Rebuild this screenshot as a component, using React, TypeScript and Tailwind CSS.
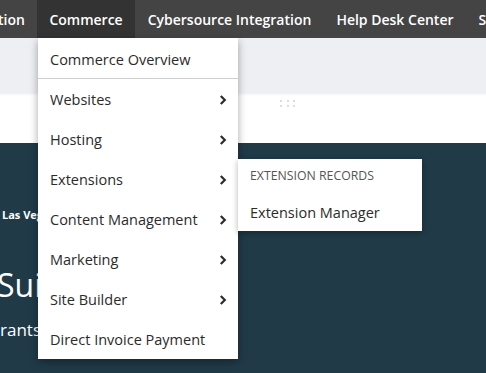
import React from 'react';

const navItems = ['tion', 'Commerce', 'Cybersource Integration', 'Help Desk Center', 'Support'];

const menuItems: { label: string; sub: boolean }[] = [
  { label: 'Websites', sub: true },
  { label: 'Hosting', sub: true },
  { label: 'Extensions', sub: true },
  { label: 'Content Management', sub: true },
  { label: 'Marketing', sub: true },
  { label: 'Site Builder', sub: true },
  { label: 'Direct Invoice Payment', sub: false },
];

const Chevron: React.FC = () => (
  <svg width="8" height="12" viewBox="0 0 8 12" className="shrink-0">
    <path d="M1.8 2 L5.8 6 L1.8 10" fill="none" stroke="#2b2b2b" strokeWidth="2.2" />
  </svg>
);

const App: React.FC = () => {
  return (
    <div
      className="relative w-[486px] h-[373px] overflow-hidden bg-[#203a48]"
      style={{ fontFamily: '"Open Sans", "Liberation Sans", sans-serif' }}
    >
      {/* top nav */}
      <nav className="flex h-[38px] bg-[#444444] text-white text-[14px] font-semibold whitespace-nowrap -ml-[2px]">
        {navItems.map((item, i) => (
          <div
            key={item}
            className={`flex shrink-0 items-center h-full ${i === 0 ? 'pl-0 pr-[12px]' : 'px-[12.5px]'} ${
              item === 'Commerce' ? 'bg-[#333333]' : ''
            }`}
          >
            {item}
          </div>
        ))}
      </nav>

      {/* light toolbar band */}
      <div className="h-[55px] bg-[#eeeff3]" />

      {/* white strip with drag handle */}
      <div className="h-[50px] bg-white shadow-[inset_0_3px_3px_-2px_rgba(0,0,0,0.08)] flex justify-start pl-[280px] pt-[7px]">
        <div className="grid grid-cols-3 gap-x-[4.5px] gap-y-[3px] h-fit">
          {Array.from({ length: 6 }).map((_, i) => (
            <span key={i} className="w-[2px] h-[2px] bg-[#dcdcdc]" />
          ))}
        </div>
      </div>

      {/* dark hero, mostly covered by the menu */}
      <div className="w-[38px] overflow-hidden whitespace-nowrap text-white">
        <div className="pl-[2px] pt-[65px] text-[11px] font-bold leading-[14px]">Las Vegas</div>
        <div className="pt-[43px] -ml-[3px] text-[32px] leading-[40px]">Suite</div>
        <div className="pt-[14px] text-[17px] leading-[22px]">rants</div>
      </div>

      {/* commerce dropdown */}
      <div className="absolute left-[38px] top-[38px] w-[200px] bg-white shadow-[0_3px_8px_rgba(0,0,0,0.35)] text-[#2b2b2b] text-[14.5px]">
        <div className="h-[40px] flex items-center px-[12px] pt-[4px]">Commerce Overview</div>
        <div className="h-px bg-[#cfcfcf]" />
        {menuItems.map((m) => (
          <div key={m.label} className="h-[40px] flex items-center justify-between pl-[12px] pr-[11px] pt-[2px]">
            <span>{m.label}</span>
            {m.sub && <Chevron />}
          </div>
        ))}
      </div>

      {/* extensions submenu */}
      <div className="absolute left-[238px] top-[159px] w-[184px] h-[72px] bg-white shadow-[0_2px_6px_rgba(0,0,0,0.3)]">
        <div className="h-[34px] flex items-center px-[12px] pt-[1px] text-[12.3px] text-[#555555] uppercase">
          Extension Records
        </div>
        <div className="h-[38px] flex items-center px-[12px] pt-[2px] text-[14.5px] text-[#2b2b2b]">Extension Manager</div>
      </div>
    </div>
  );
};

export default App;
